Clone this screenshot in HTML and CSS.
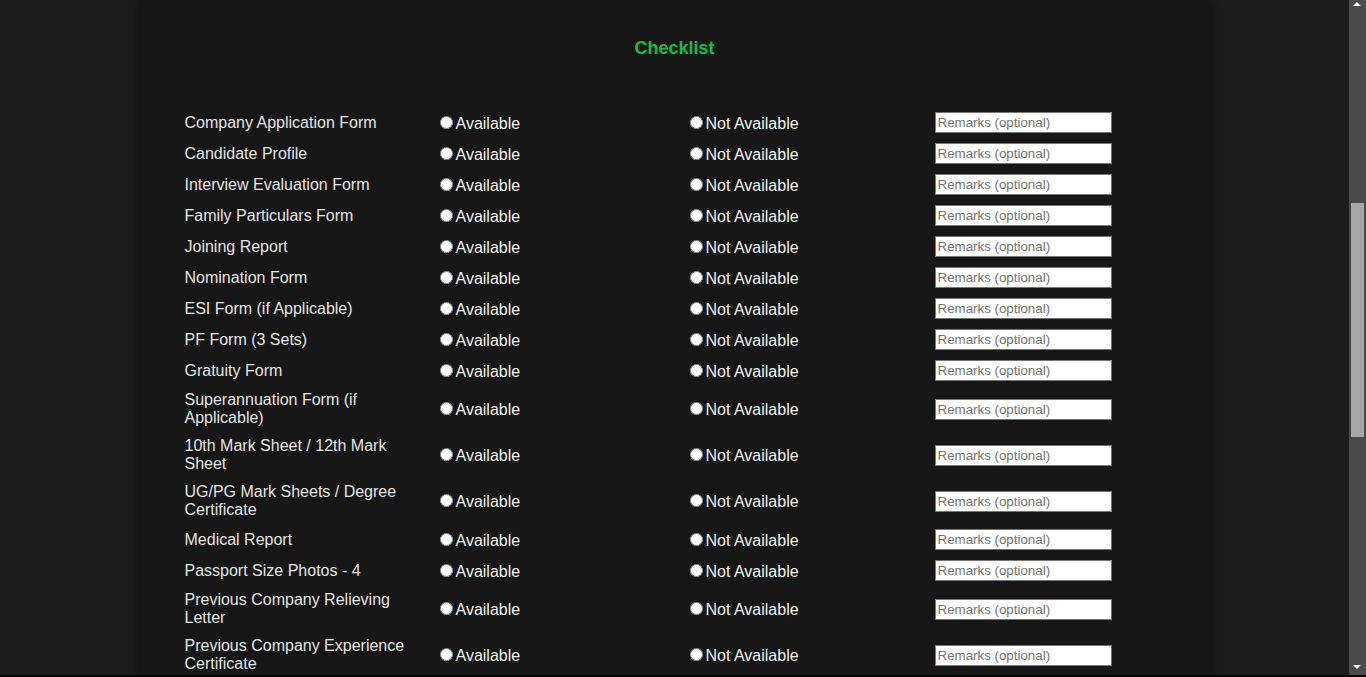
FILE: index.html
```html
<!DOCTYPE html>
<html lang="en">
<head>
<meta charset="utf-8">
<title>Checklist</title>
<link rel="stylesheet" href="styles.css">
</head>
<body>
<div class="page">
  <div class="container">
    <h2 class="title">Checklist</h2>
    <table class="checklist">
      <tbody>
        <tr><td class="label">Company Application Form</td><td><label><input type="radio" name="r1">Available</label></td><td><label><input type="radio" name="r1">Not Available</label></td><td><input class="remarks" type="text" placeholder="Remarks (optional)"></td></tr>
        <tr><td class="label">Candidate Profile</td><td><label><input type="radio" name="r2">Available</label></td><td><label><input type="radio" name="r2">Not Available</label></td><td><input class="remarks" type="text" placeholder="Remarks (optional)"></td></tr>
        <tr><td class="label">Interview Evaluation Form</td><td><label><input type="radio" name="r3">Available</label></td><td><label><input type="radio" name="r3">Not Available</label></td><td><input class="remarks" type="text" placeholder="Remarks (optional)"></td></tr>
        <tr><td class="label">Family Particulars Form</td><td><label><input type="radio" name="r4">Available</label></td><td><label><input type="radio" name="r4">Not Available</label></td><td><input class="remarks" type="text" placeholder="Remarks (optional)"></td></tr>
        <tr><td class="label">Joining Report</td><td><label><input type="radio" name="r5">Available</label></td><td><label><input type="radio" name="r5">Not Available</label></td><td><input class="remarks" type="text" placeholder="Remarks (optional)"></td></tr>
        <tr><td class="label">Nomination Form</td><td><label><input type="radio" name="r6">Available</label></td><td><label><input type="radio" name="r6">Not Available</label></td><td><input class="remarks" type="text" placeholder="Remarks (optional)"></td></tr>
        <tr><td class="label">ESI Form (if Applicable)</td><td><label><input type="radio" name="r7">Available</label></td><td><label><input type="radio" name="r7">Not Available</label></td><td><input class="remarks" type="text" placeholder="Remarks (optional)"></td></tr>
        <tr><td class="label">PF Form (3 Sets)</td><td><label><input type="radio" name="r8">Available</label></td><td><label><input type="radio" name="r8">Not Available</label></td><td><input class="remarks" type="text" placeholder="Remarks (optional)"></td></tr>
        <tr><td class="label">Gratuity Form</td><td><label><input type="radio" name="r9">Available</label></td><td><label><input type="radio" name="r9">Not Available</label></td><td><input class="remarks" type="text" placeholder="Remarks (optional)"></td></tr>
        <tr><td class="label">Superannuation Form (if Applicable)</td><td><label><input type="radio" name="r10">Available</label></td><td><label><input type="radio" name="r10">Not Available</label></td><td><input class="remarks" type="text" placeholder="Remarks (optional)"></td></tr>
        <tr><td class="label">10th Mark Sheet / 12th Mark Sheet</td><td><label><input type="radio" name="r11">Available</label></td><td><label><input type="radio" name="r11">Not Available</label></td><td><input class="remarks" type="text" placeholder="Remarks (optional)"></td></tr>
        <tr><td class="label">UG/PG Mark Sheets / Degree Certificate</td><td><label><input type="radio" name="r12">Available</label></td><td><label><input type="radio" name="r12">Not Available</label></td><td><input class="remarks" type="text" placeholder="Remarks (optional)"></td></tr>
        <tr><td class="label">Medical Report</td><td><label><input type="radio" name="r13">Available</label></td><td><label><input type="radio" name="r13">Not Available</label></td><td><input class="remarks" type="text" placeholder="Remarks (optional)"></td></tr>
        <tr><td class="label">Passport Size Photos - 4</td><td><label><input type="radio" name="r14">Available</label></td><td><label><input type="radio" name="r14">Not Available</label></td><td><input class="remarks" type="text" placeholder="Remarks (optional)"></td></tr>
        <tr><td class="label">Previous Company Relieving Letter</td><td><label><input type="radio" name="r15">Available</label></td><td><label><input type="radio" name="r15">Not Available</label></td><td><input class="remarks" type="text" placeholder="Remarks (optional)"></td></tr>
        <tr><td class="label">Previous Company Experience Certificate</td><td><label><input type="radio" name="r16">Available</label></td><td><label><input type="radio" name="r16">Not Available</label></td><td><input class="remarks" type="text" placeholder="Remarks (optional)"></td></tr>
      </tbody>
    </table>
  </div>
</div>
<div class="scrollbar">
  <div class="arrow up"></div>
  <div class="track"><div class="thumb"></div></div>
  <div class="arrow down"></div>
</div>
<div class="bottom-edge"></div>
</body>
</html>
```

FILE: styles.css
```css
html {
  overflow: hidden;
  background: #1c1c1c;
}
body {
  margin: 0;
  padding-right: 17px;
  background: #1c1c1c;
  font-family: "Liberation Sans", Arial, sans-serif;
  color: #ececec;
}
.page {
  width: 100%;
}
.container {
  width: 1070px;
  margin: 0 auto;
  background: #171717;
  box-shadow: 0 0 10px rgba(0, 0, 0, 0.45);
  padding: 38px 0 40px;
  box-sizing: border-box;
  min-height: 900px;
}
.title {
  margin: 0 0 48px;
  text-align: center;
  font-size: 18px;
  line-height: 21px;
  font-weight: bold;
  color: #06c14f;
}
.checklist {
  border-collapse: collapse;
  width: 1000px;
  margin-left: 40px;
  table-layout: fixed;
}
.checklist td {
  padding: 5px;
  width: 240px;
  vertical-align: middle;
  font-size: 16px;
  line-height: 18px;
}
.checklist .label {
  color: #e4e4e4;
}
.checklist label {
  color: #f2f2f2;
}
.checklist input[type="radio"] {
  margin: 3px 3px 0 5px;
}
.remarks {
  box-sizing: border-box;
  width: 177px;
  height: 21px;
  border: 1px solid #767676;
  padding: 1px 2px;
  margin: 0;
  font-family: "Liberation Sans", Arial, sans-serif;
  font-size: 13.33px;
  background: #ffffff;
  color: #000;
  vertical-align: middle;
}
.remarks::placeholder {
  color: #757575;
}
.scrollbar {
  position: fixed;
  top: 0;
  right: 0;
  width: 17px;
  height: 677px;
  background: #4a4a4a;
  display: flex;
  flex-direction: column;
}
.arrow {
  height: 17px;
  flex: none;
  position: relative;
}
.arrow.up::after,
.arrow.down::after {
  content: "";
  position: absolute;
  left: 4px;
  width: 0;
  height: 0;
  border-left: 4px solid transparent;
  border-right: 4px solid transparent;
}
.arrow.up::after {
  top: 2px;
  border-bottom: 4px solid #ffffff;
}
.arrow.down::after {
  bottom: 8px;
  border-top: 4px solid #ffffff;
}
.track {
  flex: 1;
  position: relative;
}
.thumb {
  position: absolute;
  left: 2px;
  right: 2px;
  top: 186px;
  height: 234px;
  background: #a6a6a6;
}
.bottom-edge {
  position: fixed;
  left: 0;
  right: 0;
  bottom: 0;
  height: 2px;
  background: #000;
}
```
